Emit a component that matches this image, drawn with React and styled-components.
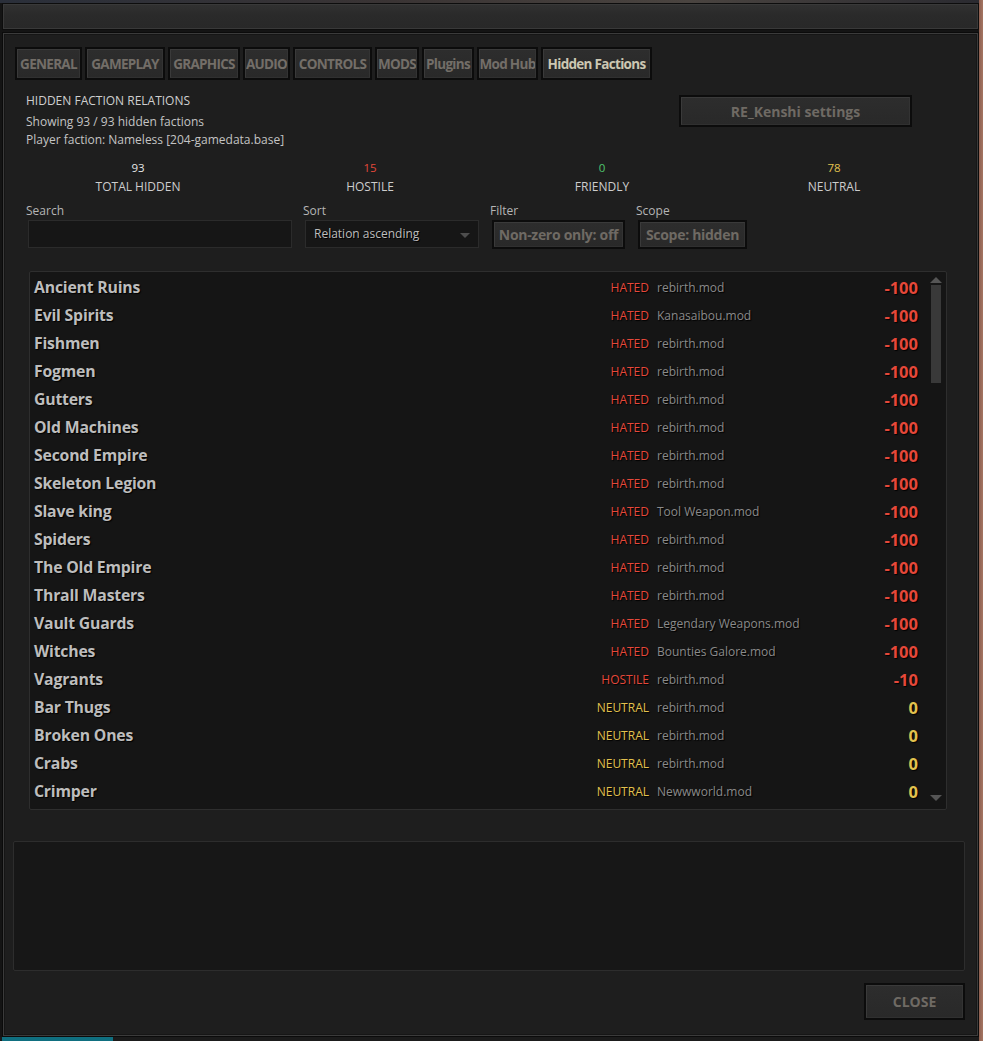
import React from "react";
import styled, { createGlobalStyle, css } from "styled-components";

const GlobalStyle = createGlobalStyle`
  html, body {
    margin: 0;
    padding: 0;
    background: #121212;
  }
  body {
    font-family: "Open Sans", "DejaVu Sans", sans-serif;
    font-size: 12px;
    color: #c8c8c8;
  }
`;

const TABS = [
  { name: "GENERAL", width: 67 },
  { name: "GAMEPLAY", width: 80 },
  { name: "GRAPHICS", width: 72 },
  { name: "AUDIO", width: 47 },
  { name: "CONTROLS", width: 79 },
  { name: "MODS", width: 44 },
  { name: "Plugins", width: 52 },
  { name: "Mod Hub", width: 61 },
  { name: "Hidden Factions", width: 111, active: true },
];

const STATS = [
  { value: 93, label: "TOTAL HIDDEN", tone: "plain" },
  { value: 15, label: "HOSTILE", tone: "red" },
  { value: 0, label: "FRIENDLY", tone: "green" },
  { value: 78, label: "NEUTRAL", tone: "yellow" },
];

const FACTIONS = [
  ["Ancient Ruins", "HATED", "rebirth.mod", -100],
  ["Evil Spirits", "HATED", "Kanasaibou.mod", -100],
  ["Fishmen", "HATED", "rebirth.mod", -100],
  ["Fogmen", "HATED", "rebirth.mod", -100],
  ["Gutters", "HATED", "rebirth.mod", -100],
  ["Old Machines", "HATED", "rebirth.mod", -100],
  ["Second Empire", "HATED", "rebirth.mod", -100],
  ["Skeleton Legion", "HATED", "rebirth.mod", -100],
  ["Slave king", "HATED", "Tool Weapon.mod", -100],
  ["Spiders", "HATED", "rebirth.mod", -100],
  ["The Old Empire", "HATED", "rebirth.mod", -100],
  ["Thrall Masters", "HATED", "rebirth.mod", -100],
  ["Vault Guards", "HATED", "Legendary Weapons.mod", -100],
  ["Witches", "HATED", "Bounties Galore.mod", -100],
  ["Vagrants", "HOSTILE", "rebirth.mod", -10],
  ["Bar Thugs", "NEUTRAL", "rebirth.mod", 0],
  ["Broken Ones", "NEUTRAL", "rebirth.mod", 0],
  ["Crabs", "NEUTRAL", "rebirth.mod", 0],
  ["Crimper", "NEUTRAL", "Newwworld.mod", 0],
];

const toneColor = {
  plain: "#e6e6e6",
  red: "#e5483a",
  green: "#4fc56e",
  yellow: "#e2c24e",
};

function App() {
  return (
    <Screen>
      <GlobalStyle />
      <TitleBar />
      <Window>
        <TabRow>
          {TABS.map((t) => (
            <Tab key={t.name} $width={t.width} $active={t.active}>
              <span>{t.name}</span>
            </Tab>
          ))}
        </TabRow>

        <Header>
          <Info>
            <InfoTitle>HIDDEN FACTION RELATIONS</InfoTitle>
            <InfoLine>Showing 93 / 93 hidden factions</InfoLine>
            <InfoLine>Player faction: Nameless [204-gamedata.base]</InfoLine>
          </Info>
          <SettingsButton $width={233} $height={32}>
            <span>RE_Kenshi settings</span>
          </SettingsButton>
        </Header>

        <Stats>
          {STATS.map((s) => (
            <Stat key={s.label}>
              <StatValue $tone={s.tone}>{s.value}</StatValue>
              <StatLabel>{s.label}</StatLabel>
            </Stat>
          ))}
        </Stats>

        <Controls>
          <Field>
            <FieldLabel>Search</FieldLabel>
            <SearchBox $width={264} />
          </Field>
          <Field>
            <FieldLabel>Sort</FieldLabel>
            <SelectBox $width={174}>
              Relation ascending
              <Caret />
            </SelectBox>
          </Field>
          <Field>
            <FieldLabel>Filter</FieldLabel>
            <GameButton $width={133} $height={29} $small>
              <span>Non-zero only: off</span>
            </GameButton>
          </Field>
          <Field>
            <FieldLabel>Scope</FieldLabel>
            <GameButton $width={109} $height={29} $small>
              <span>Scope: hidden</span>
            </GameButton>
          </Field>
        </Controls>

        <ListPanel>
          <Rows>
            {FACTIONS.map(([name, status, mod, value]) => {
              const tone = status === "NEUTRAL" ? "yellow" : "red";
              return (
                <Row key={name}>
                  <FactionName>{name}</FactionName>
                  <Status $tone={tone}>{status}</Status>
                  <ModName>{mod}</ModName>
                  <Value $tone={tone}>{value}</Value>
                </Row>
              );
            })}
          </Rows>
          <ScrollBar>
            <Arrow $up />
            <Thumb />
            <Track />
            <Arrow />
          </ScrollBar>
        </ListPanel>

        <DetailBox />

        <Footer>
          <GameButton $width={101} $height={37}>
            <span>CLOSE</span>
          </GameButton>
        </Footer>
      </Window>
    </Screen>
  );
}

const Screen = styled.div`
  width: 983px;
  height: 1041px;
  box-sizing: border-box;
  padding: 3px 0 0 2px;
  overflow: hidden;
  background:
    linear-gradient(to right, transparent 979px, #8d5f50 979px, #a47562 983px),
    linear-gradient(to right, #2a2f3a 0, #3a3434 40%, #4a4440 70%, #2a2a30 100%) top left / 100% 3px no-repeat,
    linear-gradient(to right, #1a1a1a 0, #1a1a1a 2px, #0f6f80 2px, #0f6f80 113px, #1b1b1b 113px) bottom left / 100% 4px no-repeat,
    #141414;
`;

const TitleBar = styled.div`
  width: 977px;
  height: 27px;
  box-sizing: border-box;
  border: 1px solid #0d0d0d;
  box-shadow: inset 0 0 0 1px #393939;
  background: linear-gradient(#313131, #2a2a2a 45%, #282828);
`;

const Window = styled.div`
  margin-top: 2px;
  width: 977px;
  height: 1005px;
  box-sizing: border-box;
  border: 1px solid #0b0b0b;
  box-shadow: inset 0 0 0 1px #3b3b3b, inset 0 0 0 2px #161616;
  background: #1e1e1e;
  padding: 14px 13px 15px 10px;
  display: flex;
  flex-direction: column;
`;

const TabRow = styled.div`
  display: flex;
  gap: 3px;
  padding-left: 2px;
`;

const boxed = css`
  box-sizing: border-box;
  border: 2px solid #0c0c0c;
  background: #0c0c0c;
  display: flex;

  span {
    flex: 1;
    display: flex;
    align-items: center;
    justify-content: center;
    border: 1px solid #3a3a3a;
    border-right-color: #333;
    border-bottom-color: #303030;
    background: linear-gradient(#2d2d2d, #292929);
    white-space: nowrap;
    overflow: hidden;
    font-weight: 700;
    color: #6f6a64;
  }
`;

const Tab = styled.div`
  ${boxed};
  width: ${(p) => p.$width}px;
  height: 33px;

  span {
    font-size: 13.5px;
    letter-spacing: -0.7px;
    padding-top: 1px;
    color: ${(p) => (p.$active ? "#ccc7b2" : "#736e68")};
  }
`;

const GameButton = styled.div`
  ${boxed};
  width: ${(p) => p.$width}px;
  height: ${(p) => p.$height}px;

  span {
    font-size: 14px;
    letter-spacing: ${(p) => (p.$small ? -0.3 : 0)}px;
  }
`;

const SettingsButton = styled(GameButton)`
  margin-top: 3px;
`;

const Header = styled.div`
  display: flex;
  justify-content: space-between;
  align-items: flex-start;
  margin-top: 12px;
  padding: 0 53px 0 13px;
`;

const Info = styled.div`
  display: flex;
  flex-direction: column;
`;

const InfoTitle = styled.div`
  line-height: 18px;
  margin-bottom: 3px;
  color: #cfcfcf;
`;

const InfoLine = styled.div`
  line-height: 18px;
  color: #c4c4c4;
`;

const Stats = styled.div`
  display: grid;
  grid-template-columns: repeat(4, 232px);
  margin-top: 10px;
  padding-left: 9px;
`;

const Stat = styled.div`
  display: flex;
  flex-direction: column;
  align-items: center;
`;

const StatValue = styled.div`
  line-height: 18px;
  font-size: 11.5px;
  color: ${(p) => toneColor[p.$tone]};
`;

const StatLabel = styled.div`
  line-height: 19px;
  color: #cdcdcd;
`;

const Controls = styled.div`
  display: flex;
  align-items: flex-start;
  gap: 13px;
  margin-top: 8px;
  padding-left: 15px;
`;

const Field = styled.div`
  display: flex;
  flex-direction: column;
`;

const FieldLabel = styled.div`
  line-height: 14px;
  margin: 0 0 2px -2px;
  color: #b5b5b5;
`;

const SearchBox = styled.div`
  width: ${(p) => p.$width}px;
  height: 28px;
  box-sizing: border-box;
  border: 1px solid #2b2b2b;
  background: #161616;
`;

const SelectBox = styled(SearchBox)`
  position: relative;
  display: flex;
  align-items: center;
  padding: 0 0 2px 8px;
  font-size: 12px;
  color: #bdbdbd;
  text-shadow: 1px 1px 0 #000;
`;

const Caret = styled.div`
  position: absolute;
  right: 8px;
  top: 12px;
  width: 0;
  height: 0;
  border-left: 5px solid transparent;
  border-right: 5px solid transparent;
  border-top: 5px solid #4e4e4e;
`;

const ListPanel = styled.div`
  margin: 22px 0 0 16px;
  width: 918px;
  height: 539px;
  box-sizing: border-box;
  border: 1px solid #2e2e2e;
  border-radius: 2px;
  background: #151515;
  display: flex;
`;

const Rows = styled.div`
  flex: 1;
  padding: 1px 8px 0 4px;
  overflow: hidden;
`;

const Row = styled.div`
  display: grid;
  grid-template-columns: 500px 115px 1fr 80px;
  align-items: center;
  height: 28px;
  text-shadow: 1px 1px 1px #000;
`;

const FactionName = styled.div`
  font-size: 15.8px;
  font-weight: 700;
  letter-spacing: -0.2px;
  color: #bdbdbd;
  white-space: nowrap;
`;

const Status = styled.div`
  text-align: right;
  font-size: 12px;
  color: ${(p) => toneColor[p.$tone]};
`;

const ModName = styled.div`
  padding-left: 8px;
  font-size: 12px;
  color: #8a8a8a;
  white-space: nowrap;
`;

const Value = styled.div`
  text-align: right;
  font-size: 16.5px;
  font-weight: 700;
  color: ${(p) => toneColor[p.$tone]};
`;

const ScrollBar = styled.div`
  width: 20px;
  padding: 5px 4px 8px 3px;
  box-sizing: border-box;
  display: flex;
  flex-direction: column;
  align-items: center;
`;

const Arrow = styled.div`
  width: 0;
  height: 0;
  border-left: 6px solid transparent;
  border-right: 6px solid transparent;
  ${(p) =>
    p.$up
      ? css`border-bottom: 6px solid #555;`
      : css`border-top: 6px solid #555;`}
`;

const Thumb = styled.div`
  width: 10px;
  height: 98px;
  margin-top: 2px;
  background: #393939;
`;

const Track = styled.div`
  flex: 1;
`;

const DetailBox = styled.div`
  margin-top: 31px;
  height: 130px;
  box-sizing: border-box;
  border: 1px solid #2d2d2d;
  border-radius: 2px;
  background: #171717;
`;

const Footer = styled.div`
  display: flex;
  justify-content: flex-end;
  margin-top: 12px;
`;

export default App;
